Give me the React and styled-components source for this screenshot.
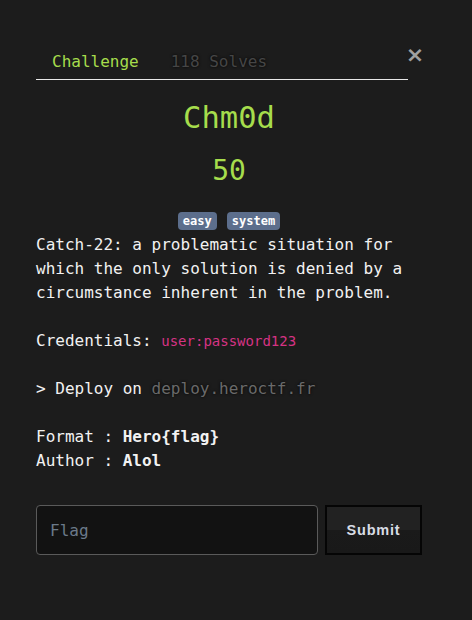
import React from "react";
import styled, { createGlobalStyle } from "styled-components";

const Global = createGlobalStyle`
  html, body { margin: 0; padding: 0; background: #1c1c1c; }
  body { font-family: "DejaVu Sans Mono", monospace; color: #f2f2f2; }
  * { box-sizing: border-box; }
`;

const Page = styled.div`
  width: 472px;
  min-height: 620px;
  padding: 43px 50px 0 36px;
`;

const Header = styled.div`
  display: flex;
  align-items: flex-start;
`;

const Tabs = styled.nav`
  flex: 1;
  display: flex;
  border-bottom: 1px solid #e8e8e8;
`;

const Tab = styled.span`
  padding: 7px 16px 5px;
  font-size: 16px;
  line-height: 24px;
  color: ${(p) => (p.$active ? "#a6dd4c" : "#464646")};
  text-shadow: ${(p) => (p.$active ? "none" : "0 0 3px #000")};
`;

const Close = styled.span`
  width: 14px;
  display: flex;
  justify-content: center;
  font-family: "DejaVu Sans", sans-serif;
  font-weight: bold;
  font-size: 22px;
  line-height: 22px;
  color: #a0a0a0;
  margin-top: 1px;
`;

const Title = styled.h2`
  margin: 19px 0 0;
  text-align: center;
  font-weight: normal;
  font-size: 30.5px;
  line-height: 38px;
  color: #a6dd4c;
`;

const Points = styled.h3`
  margin: 17px 0 0;
  text-align: center;
  font-weight: normal;
  font-size: 28px;
  line-height: 34px;
  color: #a6dd4c;
`;

const Tags = styled.div`
  margin-top: 24px;
  display: flex;
  justify-content: center;
  gap: 10px;
`;

const Tag = styled.span`
  background: #5c6e8c;
  color: #fff;
  font-weight: bold;
  font-size: 12px;
  line-height: 18px;
  padding: 0 5px;
  border-radius: 4px;
`;

const Description = styled.div`
  margin-top: 3px;
  font-size: 16px;
  line-height: 24px;
  color: #f2f2f2;
`;

const Para = styled.p`
  margin: 0 0 24px;
  &:last-child { margin-bottom: 0; }
`;

const Code = styled.code`
  font-family: "DejaVu Sans Mono", monospace;
  font-size: 14px;
  color: #d63384;
`;

const Muted = styled.span`
  color: #6a6a6a;
  text-shadow: 0 0 3px #000;
`;

const Form = styled.form`
  margin-top: 32px;
  display: flex;
  gap: 7px;
  width: 386px;
`;

const Input = styled.input`
  width: 282px;
  height: 50px;
  background: #121212;
  border: 1px solid #5a5a5a;
  border-radius: 4px;
  padding: 0 13px;
  font-family: "DejaVu Sans Mono", monospace;
  font-size: 16px;
  color: #ddd;
  outline: none;
  &::placeholder { color: #6b7a8a; }
`;

const Button = styled.button`
  width: 97px;
  height: 50px;
  border: 2px solid #050505;
  background: linear-gradient(#222 0%, #222 50%, #1a1a1a 50%, #191919 100%);
  color: #d8dce4;
  font-family: "Liberation Sans", Arial, sans-serif;
  font-weight: bold;
  font-size: 14.5px;
  letter-spacing: 0.8px;
  padding: 0;
`;

export default function App() {
  return (
    <Page>
      <Global />
      <Header>
        <Tabs>
          <Tab $active>Challenge</Tab>
          <Tab>118 Solves</Tab>
        </Tabs>
        <Close>×</Close>
      </Header>
      <Title>Chm0d</Title>
      <Points>50</Points>
      <Tags>
        <Tag>easy</Tag>
        <Tag>system</Tag>
      </Tags>
      <Description>
        <Para>
          Catch-22: a problematic situation for which the only solution is
          denied by a circumstance inherent in the problem.
        </Para>
        <Para>
          Credentials: <Code>user:password123</Code>
        </Para>
        <Para>
          &gt; Deploy on <Muted>deploy.heroctf.fr</Muted>
        </Para>
        <Para>
          Format : <b>Hero{"{flag}"}</b>
          <br />
          Author : <b>Alol</b>
        </Para>
      </Description>
      <Form onSubmit={(e) => e.preventDefault()}>
        <Input placeholder="Flag" />
        <Button type="submit">Submit</Button>
      </Form>
    </Page>
  );
}
